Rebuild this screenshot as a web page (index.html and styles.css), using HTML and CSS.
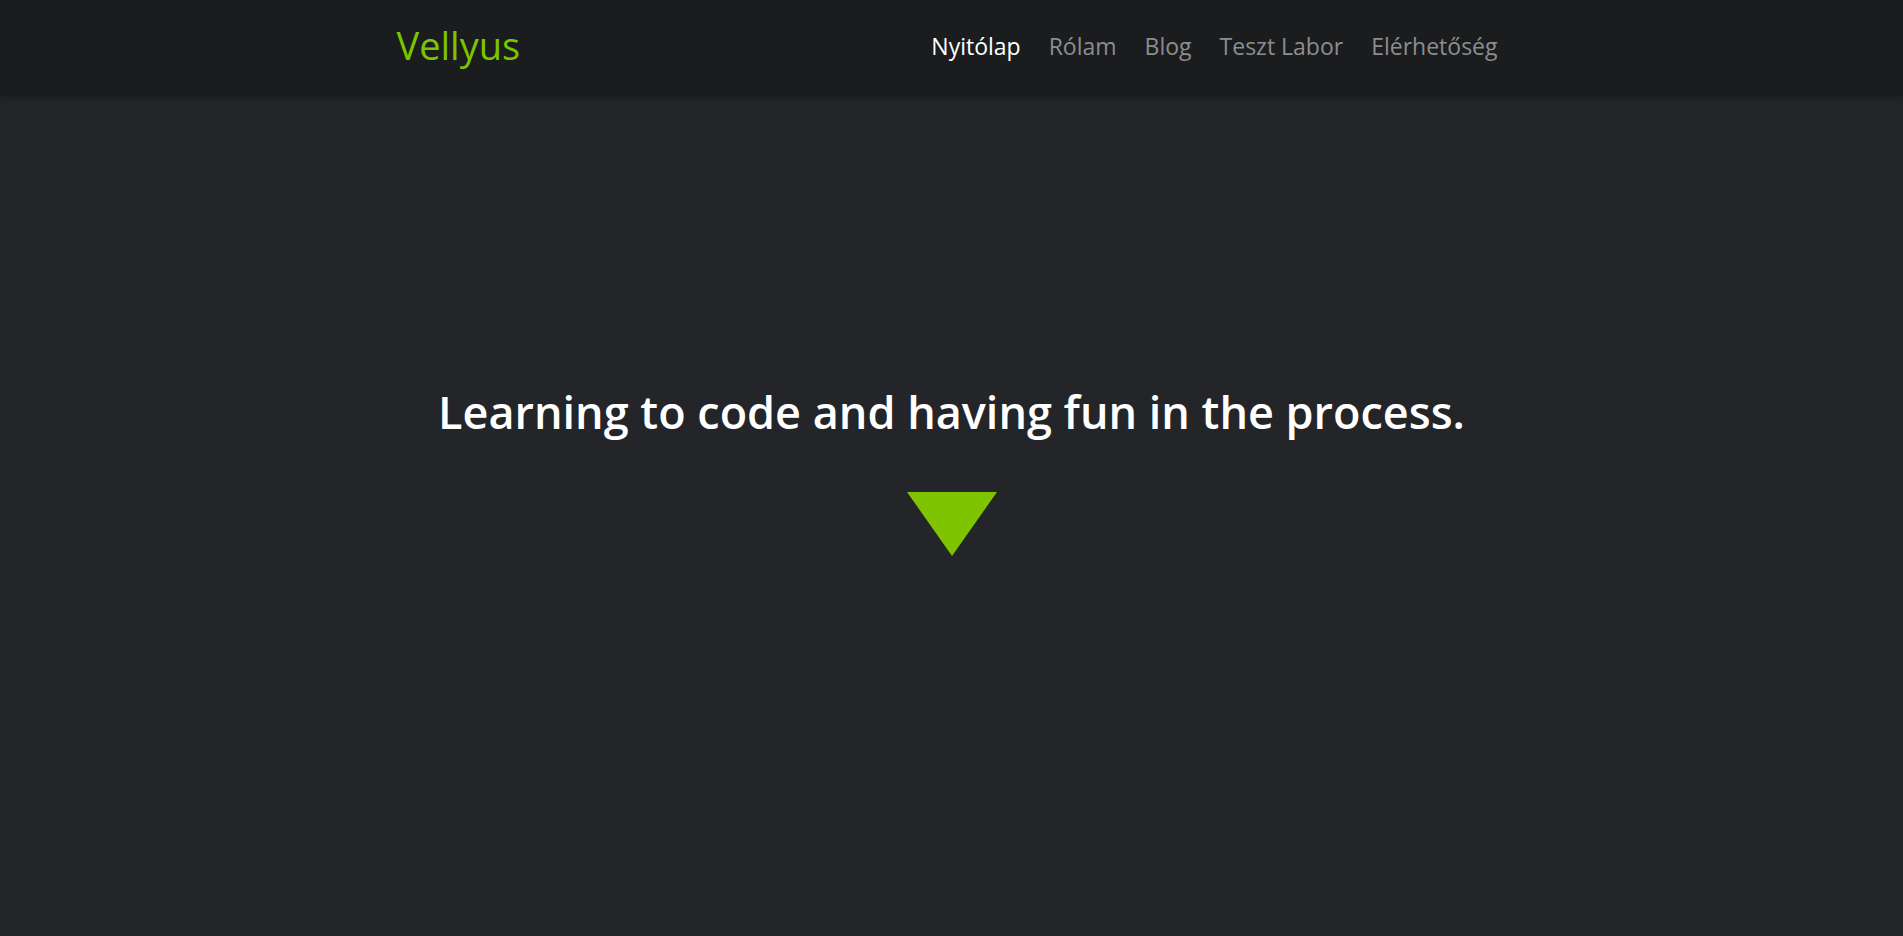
FILE: index.html
```html
<!DOCTYPE html>
<html lang="hu">
<head>
<meta charset="utf-8">
<title>Vellyus</title>
<link rel="stylesheet" href="styles.css">
</head>
<body>
<header class="navbar">
  <div class="container nav-inner">
    <a class="brand" href="#">Vellyus</a>
    <nav class="nav-links">
      <a class="nav-link active" href="#">Nyitólap</a>
      <a class="nav-link" href="#">Rólam</a>
      <a class="nav-link" href="#">Blog</a>
      <a class="nav-link" href="#">Teszt Labor</a>
      <a class="nav-link" href="#">Elérhetőség</a>
    </nav>
  </div>
</header>
<main class="hero">
  <h1 class="hero-title">Learning to code and having fun in the process.</h1>
  <div class="arrow-down"></div>
</main>
</body>
</html>
```

FILE: styles.css
```css
html, body {
  margin: 0;
  padding: 0;
}
body {
  background: #232528;
  font-family: "Open Sans", "Noto Sans", sans-serif;
  color: #fff;
  min-height: 936px;
}
.navbar {
  background: #1b1c1e;
  height: 96px;
  box-shadow: 0 2px 6px rgba(0,0,0,0.25);
}
.container {
  width: 1140px;
  margin: 0 auto;
  padding: 0 15px;
  box-sizing: border-box;
}
.nav-inner {
  height: 100%;
  display: flex;
  align-items: center;
  justify-content: space-between;
}
.brand {
  color: #7cc400;
  text-decoration: none;
  font-size: 38px;
  line-height: 1;
  margin-top: -6px;
}
.nav-links {
  display: flex;
  gap: 28px;
  margin-right: 9px;
  margin-top: -5px;
}
.nav-link {
  color: #8c8d8f;
  text-decoration: none;
  font-size: 23px;
}
.nav-link.active {
  color: #fff;
}
.hero {
  display: flex;
  flex-direction: column;
  align-items: center;
  padding-top: 289px;
}
.hero-title {
  margin: 0;
  font-size: 45px;
  font-weight: 600;
  line-height: 1.2;
}
.arrow-down {
  margin-top: 53px;
  width: 0;
  height: 0;
  border-left: 45.5px solid transparent;
  border-right: 45.5px solid transparent;
  border-top: 64px solid #7fc400;
}
```
